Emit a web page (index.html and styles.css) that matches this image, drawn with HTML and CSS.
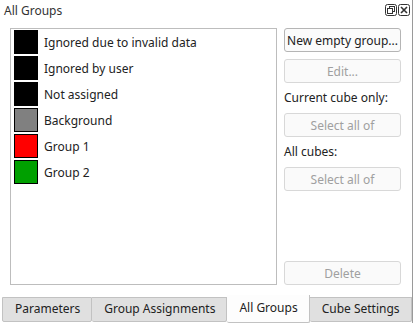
FILE: index.html
```html
<!DOCTYPE html>
<html>
<head>
<meta charset="utf-8">
<link rel="stylesheet" href="styles.css">
</head>
<body>
<div class="dock">
  <div class="titlebar">
    <span class="title">All Groups</span>
    <div class="tbtns">
      <svg class="tbtn" width="12" height="12" viewBox="0 0 12 12"><rect x="0.5" y="0.5" width="11" height="11" rx="2" fill="none" stroke="#333"/><rect x="4.5" y="2.5" width="5" height="5" fill="none" stroke="#333"/><rect x="2.5" y="4.5" width="5" height="5" fill="#fff" stroke="#333"/></svg>
      <svg class="tbtn" width="12" height="12" viewBox="0 0 12 12"><rect x="0.5" y="0.5" width="11" height="11" rx="2" fill="none" stroke="#333"/><path d="M3 3L9 9M9 3L3 9" stroke="#333" stroke-width="1.6"/></svg>
    </div>
  </div>
  <div class="content">
    <div class="list">
      <div class="item"><span class="sw" style="background:#000"></span>Ignored due to invalid data</div>
      <div class="item"><span class="sw" style="background:#000"></span>Ignored by user</div>
      <div class="item"><span class="sw" style="background:#000"></span>Not assigned</div>
      <div class="item"><span class="sw" style="background:#808080"></span>Background</div>
      <div class="item"><span class="sw" style="background:#ff0000"></span>Group 1</div>
      <div class="item"><span class="sw" style="background:#00a000"></span>Group 2</div>
    </div>
    <div class="side">
      <button class="btn">New empty group...</button>
      <button class="btn dis">Edit...</button>
      <div class="lbl">Current cube only:</div>
      <button class="btn dis">Select all of</button>
      <div class="lbl">All cubes:</div>
      <button class="btn dis">Select all of</button>
      <div class="spacer"></div>
      <button class="btn dis">Delete</button>
    </div>
  </div>
  <div class="tabs">
    <div class="tab first">Parameters</div>
    <div class="tab">Group Assignments</div>
    <div class="tab sel">All Groups</div>
    <div class="tab last">Cube Settings</div>
  </div>
</div>
</body>
</html>
```

FILE: styles.css
```css
html, body {
  margin: 0;
  padding: 0;
  background: #ffffff;
}
body {
  font-family: "Noto Sans", "Open Sans", sans-serif;
  font-size: 12px;
  color: #222;
}
.dock {
  width: 412px;
  height: 323px;
  border-right: 1px solid #9a9a9a;
  display: flex;
  flex-direction: column;
  box-sizing: content-box;
}
.titlebar {
  height: 20px;
  display: flex;
  align-items: center;
  justify-content: space-between;
  padding: 0 2px 1px 4px;
}
.title {
  color: #333;
}
.tbtns {
  display: flex;
  gap: 1px;
}
.tbtn { display: block; }
.content {
  flex: 1;
  display: flex;
  padding: 7px 11px 10px 10px;
  gap: 7px;
}
.list {
  flex: 1;
  border: 1px solid #bdbdbd;
  padding: 1px 3px;
  display: flex;
  flex-direction: column;
  gap: 2px;
}
.item {
  display: flex;
  align-items: center;
  height: 24px;
  gap: 6px;
  color: #222;
}
.sw {
  width: 22px;
  height: 22px;
  border: 1px solid #000;
  display: block;
}
.side {
  width: 117px;
  display: flex;
  flex-direction: column;
}
.btn {
  font-family: inherit;
  font-size: 12px;
  height: 24px;
  border: 1px solid #b5b5b5;
  border-radius: 3px;
  background: #fbfbfb;
  color: #222;
  padding: 0;
  margin-bottom: 7px;
  text-align: center;
}
.btn.dis {
  color: #a0a0a0;
  border-color: #d8d8d8;
  background: #fafafa;
}
.lbl {
  height: 18px;
  line-height: 18px;
  margin-top: -1px;
  margin-bottom: 6px;
  color: #222;
}
.spacer { flex: 1; }
.btn:last-child { margin-bottom: 0; }
.tabs {
  height: 28px;
  display: flex;
  align-items: flex-start;
  padding-left: 2px;
}
.tab {
  flex-shrink: 0;
  white-space: nowrap;
  margin-top: 2px;
  height: 25px;
  box-sizing: border-box;
  border: 1px solid #c2c2c2;
  border-left: none;
  background: #e0e0e0;
  padding: 0 11px 0 12px;
  line-height: 22px;
  color: #222;
  border-radius: 0 0 2px 2px;
}
.tab.first { border-left: 1px solid #c2c2c2; }
.tab.sel {
  background: #fdfdfd;
  margin-top: 0;
  height: 28px;
  line-height: 26px;
  border-top: none;
}
```
